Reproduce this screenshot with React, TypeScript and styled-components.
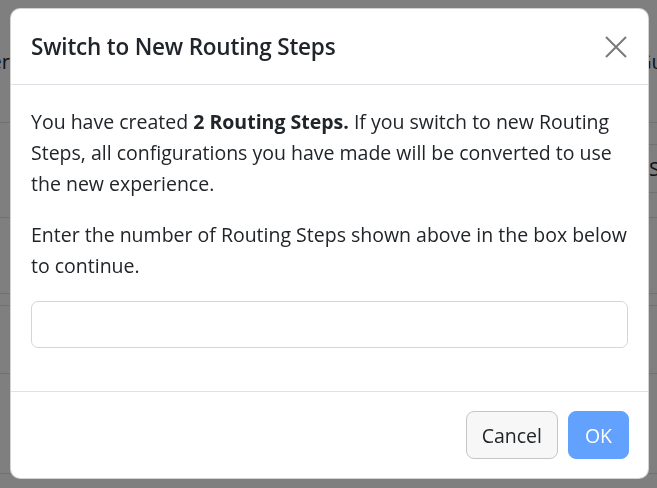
import React from "react";
import styled, { createGlobalStyle } from "styled-components";

const Global = createGlobalStyle`
  html, body { margin: 0; padding: 0; height: 100%; overflow: hidden; background: #fff; }
  body { font-family: "Open Sans", "Noto Sans", sans-serif; color: #212529; }
  * { box-sizing: border-box; }
`;

const Page = styled.div`
  width: 657px;
  height: 488px;
  overflow: hidden;
  display: flex;
  flex-direction: column;
`;

const Row = styled.div<{ $h: number }>`
  height: ${(p) => p.$h}px;
  flex: none;
  display: grid;
  grid-template-columns: 10px 1fr 20px;
  border-bottom: 1px solid #dee2e6;
  font-size: 20px;
`;

const LeftCell = styled.div`
  overflow: hidden;
  display: flex;
  justify-content: flex-end;
  align-items: center;
  white-space: nowrap;
`;

const RightCell = styled.div`
  overflow: hidden;
  display: flex;
  align-items: center;
  white-space: nowrap;
`;

const SideBox = styled.div`
  margin-top: 21px;
  height: 49px;
  width: 60px;
  flex: none;
  border-top: 1px solid #dee2e6;
  border-bottom: 1px solid #dee2e6;
  display: flex;
  align-items: center;
  padding-left: 12px;
  font-size: 20px;
`;

const RightBoxCell = styled.div`
  overflow: hidden;
  display: flex;
  align-items: flex-start;
`;

const Backdrop = styled.div`
  position: fixed;
  inset: 0;
  background: rgba(0, 0, 0, 0.5);
`;

const Dialog = styled.div`
  position: fixed;
  top: 8px;
  left: 10px;
  width: 639px;
  height: 471px;
  background: #fff;
  border: 1px solid rgba(0, 0, 0, 0.175);
  border-radius: 10px;
  display: flex;
  flex-direction: column;
  overflow: hidden;
`;

const Header = styled.div`
  height: 76px;
  flex: none;
  display: flex;
  align-items: center;
  justify-content: space-between;
  padding: 0 19px 0 20px;
  border-bottom: 1px solid #dee2e6;
`;

const Title = styled.h5`
  margin: 0;
  font-size: 22.5px;
  font-weight: 600;
  letter-spacing: -0.2px;
  color: #212529;
`;

const Close = styled.button`
  width: 26px;
  height: 26px;
  padding: 0;
  border: 0;
  background: transparent;
  display: flex;
  align-items: center;
  justify-content: center;
`;

const Body = styled.div`
  flex: 1;
  padding: 21px 20px 21px 20px;
`;

const Para = styled.p`
  margin: 0 0 20px;
  font-size: 19.5px;
  line-height: 31px;
`;

const InputWrap = styled.div`
  margin-bottom: 21px;
`;

const Input = styled.input`
  display: block;
  width: 100%;
  height: 47px;
  border: 1px solid #d3d6d9;
  border-radius: 7px;
  outline: none;
  font-size: 19.5px;
  padding: 0 16px;
`;

const Footer = styled.div`
  height: 87px;
  flex: none;
  border-top: 1px solid #dee2e6;
  display: flex;
  justify-content: flex-end;
  align-items: flex-start;
  padding: 19px 19px 0;
  gap: 10px;
`;

const Btn = styled.button<{ $primary?: boolean }>`
  height: 48px;
  padding: 0 15px;
  border-radius: 8px;
  font-family: inherit;
  font-size: 19.5px;
  border: 1px solid ${(p) => (p.$primary ? "#62a1fe" : "#c4c6c8")};
  background: ${(p) => (p.$primary ? "#62a1fe" : "#f7f7f7")};
  color: ${(p) => (p.$primary ? "#fff" : "#212529")};
  min-width: ${(p) => (p.$primary ? "61px" : "91px")};
`;

export default function App() {
  return (
    <>
      <Global />
      <Page>
        <Row $h={123}>
          <LeftCell>Provider</LeftCell>
          <div />
          <RightCell>Guide</RightCell>
        </Row>
        <Row $h={95}>
          <div />
          <div />
          <RightBoxCell>
            <SideBox>Select</SideBox>
          </RightBoxCell>
        </Row>
        <Row $h={76} />
        <Row $h={12} />
        <Row $h={68} />
        <Row $h={100} />
      </Page>
      <Backdrop />
      <Dialog>
        <Header>
          <Title>Switch to New Routing Steps</Title>
          <Close aria-label="Close">
            <svg width="22" height="22" viewBox="0 0 22 22">
              <path d="M1 1 L21 21 M21 1 L1 21" stroke="#7a7a7a" strokeWidth="2" fill="none" />
            </svg>
          </Close>
        </Header>
        <Body>
          <Para>
            You have created <b>2 Routing Steps.</b> If you switch to new Routing Steps, all
            configurations you have made will be converted to use the new experience.
          </Para>
          <Para>Enter the number of Routing Steps shown above in the box below to continue.</Para>
          <InputWrap>
            <Input type="text" />
          </InputWrap>
        </Body>
        <Footer>
          <Btn>Cancel</Btn>
          <Btn $primary>OK</Btn>
        </Footer>
      </Dialog>
    </>
  );
}
